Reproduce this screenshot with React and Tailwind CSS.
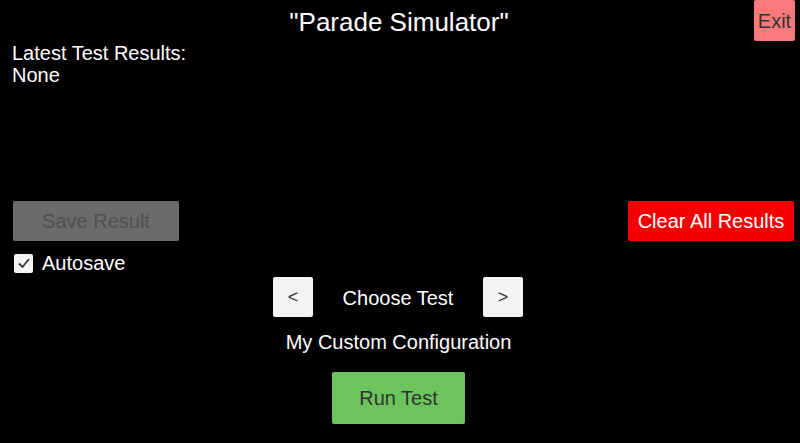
export default function App() {
  return (
    <div
      className="w-[800px] h-[443px] bg-black text-white overflow-hidden flex flex-col"
      style={{ fontFamily: '"Liberation Sans", Arial, sans-serif' }}
    >
      <div className="relative h-[42px] flex justify-center items-center">
        <h1 className="text-[26px] leading-none pt-[2px] pr-[2px]">"Parade Simulator"</h1>
        <button className="absolute right-[5px] top-0 w-[41px] h-[41px] bg-[#f87a7a] text-[#333] text-[20px] rounded-[2px] flex items-center justify-center">
          Exit
        </button>
      </div>

      <div className="px-[12px] text-[20px] leading-[22px]">
        <p>Latest Test Results:</p>
        <p>None</p>
      </div>

      <div className="mt-[115px] flex justify-between px-[13px] pr-[6px]">
        <button className="w-[166px] h-[40px] bg-[#6b6b6b] text-[#4f4f4f] text-[20px] rounded-[2px]">
          Save Result
        </button>
        <button className="w-[166px] h-[40px] bg-[#f40000] text-white text-[20px] rounded-[2px]">
          Clear All Results
        </button>
      </div>

      <div className="mt-[11px] px-[14px] flex items-center gap-[9px]">
        <span className="w-[19px] h-[19px] bg-[#f4f4f4] rounded-[2px] flex items-center justify-center">
          <svg width="14" height="14" viewBox="0 0 14 14" fill="none">
            <path d="M2 7.5 L5.5 11 L12 3" stroke="#333" strokeWidth="1.8" />
          </svg>
        </span>
        <span className="text-[20px] leading-[22px]">Autosave</span>
      </div>

      <div className="mt-[3px] pr-[4px] flex justify-center items-center">
        <button className="w-[40px] h-[40px] bg-[#f4f4f4] text-[#333] text-[18px] rounded-[2px]">
          &lt;
        </button>
        <span className="w-[170px] text-center text-[20px] pt-[2px]">Choose Test</span>
        <button className="w-[40px] h-[40px] bg-[#f4f4f4] text-[#333] text-[18px] rounded-[2px]">
          &gt;
        </button>
      </div>

      <p className="mt-[14px] pr-[3px] text-center text-[20px] leading-[22px]">My Custom Configuration</p>

      <div className="mt-[19px] pr-[3px] flex justify-center">
        <button className="w-[133px] h-[52px] bg-[#6cc45c] text-[#333] text-[20px] rounded-[2px]">
          Run Test
        </button>
      </div>
    </div>
  );
}
